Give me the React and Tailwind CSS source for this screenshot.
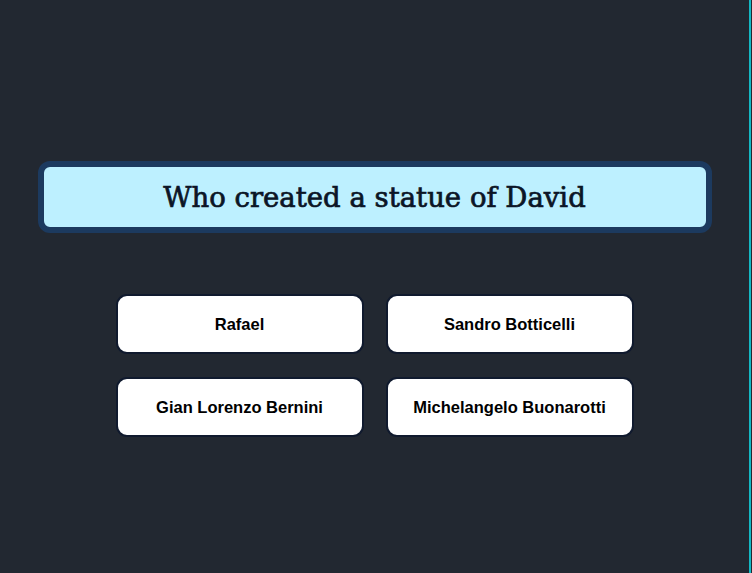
export default function App() {
  const answers = ["Rafael", "Sandro Botticelli", "Gian Lorenzo Bernini", "Michelangelo Buonarotti"];
  return (
    <div className="flex h-[573px] w-[752px] bg-[#222831]">
      <div className="flex w-[749px] flex-col items-center pt-[161px]">
        <div className="flex h-[72px] w-[674px] items-center justify-center rounded-[12px] border-[6px] border-[#1c3a5f] bg-[#bdf0ff]">
          <h1
            className="translate-y-[1px] text-[27.5px] font-normal leading-none text-[#0b1526] [-webkit-text-stroke:0.7px_#0b1526]"
            style={{ fontFamily: '"DejaVu Serif", serif' }}
          >
            Who created a statue of David
          </h1>
        </div>
        <div className="mt-[61px] grid grid-cols-[248px_248px] gap-x-[22px] gap-y-[23px]">
          {answers.map((a) => (
            <button
              key={a}
              className="flex h-[60px] items-center justify-center rounded-[11px] border-2 border-[#101a2e] bg-white text-[16.5px] font-bold text-black"
              style={{ fontFamily: '"Liberation Sans", Arial, sans-serif' }}
            >
              {a}
            </button>
          ))}
        </div>
      </div>
      <div className="h-full w-[2px] bg-[#14b8c4]" />
    </div>
  );
}
